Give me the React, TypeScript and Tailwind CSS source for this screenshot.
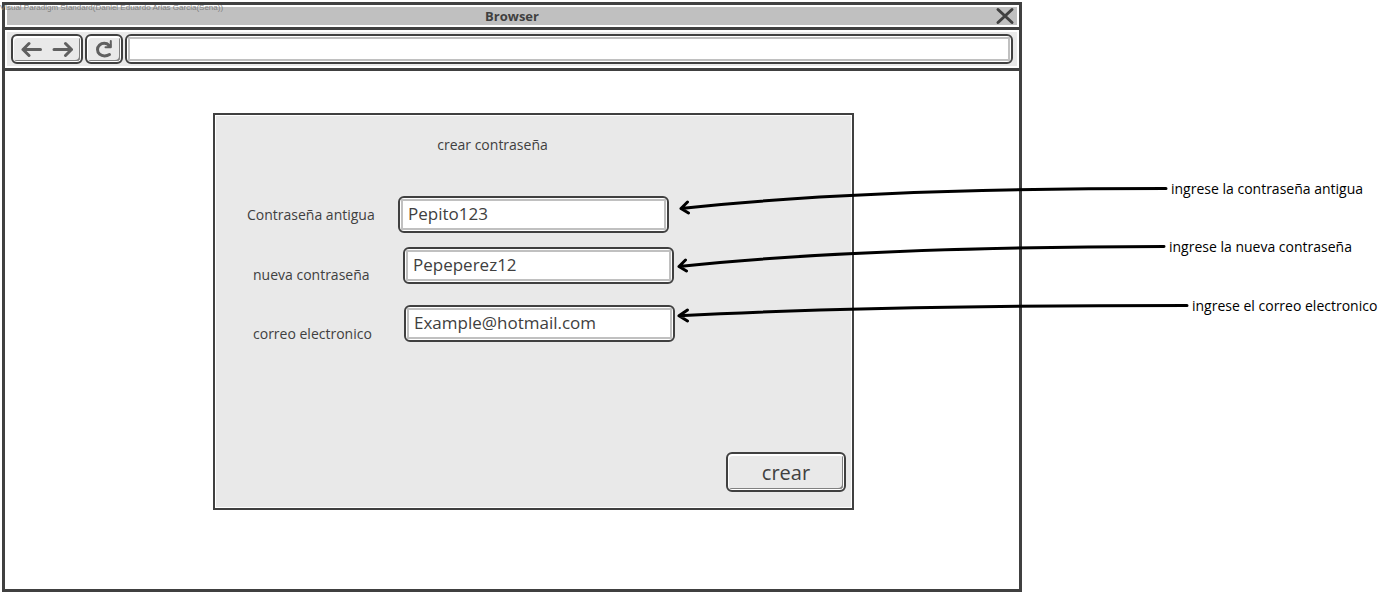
type FieldProps = {
  id: string;
  label: string;
  value: string;
  type?: string;
  rowClass: string;
  labelClass: string;
};

function Field({ id, label, value, type = "text", rowClass, labelClass }: FieldProps) {
  return (
    <div className={`flex items-start ${rowClass}`}>
      <label htmlFor={id} className={`shrink-0 text-sm leading-5 ${labelClass}`}>
        {label}
      </label>
      <div className="w-[271px] rounded-md border-2 border-[#404040] bg-white p-px">
        <input
          id={id}
          type={type}
          defaultValue={value}
          className="block h-[31px] w-full border-2 border-[#c0c0c0] bg-white px-[5px] pb-0.5 text-[17px] leading-6 text-[#404040] outline-none"
        />
      </div>
    </div>
  );
}

const bevel =
  "rounded-md border-2 border-[#404040] bg-[#e9e9e9] shadow-[inset_0_-1px_0_#ffffff,inset_1px_2px_0_#ffffff,inset_-1px_0_0_#ffffff,inset_-2px_-2px_0_#808080]";

export default function App() {
  return (
    <div className="relative flex min-h-[596px] overflow-hidden bg-white font-['Open_Sans','Noto_Sans',sans-serif] text-[#404040]">
      <p className="absolute top-0 left-0 z-10 font-['Liberation_Sans',sans-serif] text-[8px] leading-4 whitespace-nowrap text-[#808080]">
        Visual Paradigm Standard(Daniel Eduardo Arias Garcia(Sena))
      </p>

      <main className="mt-0.5 mb-1 ml-0.5 flex min-w-0 flex-1 flex-col border-3 border-[#404040]">
        <header className="border-b-3 border-[#404040] p-0.5">
          <div className="flex h-[18px] items-center bg-[#c0c0c0] pr-1">
            <h1 className="flex-1 pl-5 text-center text-[13px] leading-5 font-bold">Browser</h1>
            <button type="button" aria-label="Cerrar" className="h-4 w-4">
              <svg viewBox="0 0 16 16" className="h-4 w-4 overflow-visible" fill="none" stroke="#404040" strokeWidth="3" strokeLinecap="round">
                <path d="M1 1.500 15 14.500M15 1.500 1 14.500" />
              </svg>
            </button>
          </div>
        </header>

        <nav className="border-b-3 border-[#404040] p-0.5">
          <div className="flex gap-0.5 bg-[#e9e9e9] px-1 py-0.5">
            <div className={`flex h-[30px] w-[72px] items-center justify-between px-2 ${bevel}`}>
              <button type="button" aria-label="Atrás">
                <svg viewBox="0 0 22 16" className="h-4 w-[22px]" fill="none" stroke="#606060" strokeWidth="3" strokeLinecap="round" strokeLinejoin="round">
                  <path d="M19.500 8.500H2M8 2.500 2 8.500 8 14.500" />
                </svg>
              </button>
              <button type="button" aria-label="Adelante">
                <svg viewBox="0 0 22 16" className="h-4 w-[22px]" fill="none" stroke="#606060" strokeWidth="3" strokeLinecap="round" strokeLinejoin="round">
                  <path d="M3 8.500H20.500M14.500 2.500 20.500 8.500 14.500 14.500" />
                </svg>
              </button>
            </div>
            <button type="button" aria-label="Recargar" className={`flex h-[30px] w-[38px] items-center justify-center ${bevel}`}>
              <svg viewBox="0 0 18 18" className="h-[18px] w-[18px]" fill="none" stroke="#606060" strokeWidth="3" strokeLinecap="round">
                <path d="M14.500 14.500C13 15.500 11.500 15.900 9.500 15.900C5.700 15.900 2.500 13.300 2.500 9.600C2.500 6 5.500 3.300 9.300 3.300C11.300 3.300 12.800 4 14 5.300" />
                <path d="M15.800 1V7.300H10.500" strokeWidth="2" strokeLinejoin="round" />
                <path d="M15.800 4.500V7.300H12.500Z" fill="#606060" strokeWidth="1" />
              </svg>
            </button>
            <div className="flex-1 rounded-md border-2 border-[#404040] bg-white p-px">
              <input type="text" aria-label="Dirección" className="block h-6 w-full border-2 border-[#c0c0c0] bg-white px-1 text-sm outline-none" />
            </div>
          </div>
        </nav>

        <div className="flex flex-1 items-start justify-end pt-[42px] pr-[165px]">
          <form
            onSubmit={(event) => event.preventDefault()}
            className="flex min-h-[397px] w-[641px] shrink-0 flex-col border-2 border-[#404040] bg-[#e9e9e9] pb-4 shadow-[inset_0_0_0_1px_#ffffff]"
          >
            <h2 className="pt-5 pr-[82px] text-center text-sm leading-5">crear contraseña</h2>
            <div className="pt-[41px]">
              <Field id="old-password" label="Contraseña antigua" value="Pepito123" rowClass="pl-8" labelClass="w-[151px] pt-[9px]" />
              <Field id="new-password" label="nueva contraseña" value="Pepeperez12" rowClass="mt-3.5 pl-[38px]" labelClass="w-[150px] pt-[18px]" />
              <Field id="email" label="correo electronico" value="Example@hotmail.com" type="email" rowClass="mt-5 pl-[38px]" labelClass="w-[151px] pt-[19px]" />
            </div>
            <div className="mt-auto flex justify-end pr-1.5">
              <button type="submit" className={`h-10 w-[120px] pt-0.5 text-xl leading-8 ${bevel}`}>
                crear
              </button>
            </div>
          </form>
        </div>
      </main>

      <aside className="w-[374px] shrink-0 pt-[179px] text-sm leading-5 whitespace-nowrap text-black">
        <p className="pl-[149px]">ingrese la contraseña antigua</p>
        <p className="mt-[38px] pl-[147px]">ingrese la nueva contraseña</p>
        <p className="mt-[39px] pl-[170px]">ingrese el correo electronico</p>
      </aside>

      <svg
        viewBox="670 180 530 150"
        aria-hidden="true"
        className="pointer-events-none absolute top-[180px] right-[196px] h-[150px] w-[530px]"
        fill="none"
        stroke="#000000"
        strokeWidth="3"
        strokeLinecap="round"
        strokeLinejoin="round"
      >
        <path d="M1166 188.500Q863 188.500 681 208.500M687.500 202 681 208.500 688.500 213" />
        <path d="M1164 246.500Q861 247 679 266.500M685.500 260 679 266.500 686.500 271" />
        <path d="M1187 305.500Q870 305.500 679 315.800M687.500 310 679 315.800 687.500 321" />
      </svg>
    </div>
  );
}
